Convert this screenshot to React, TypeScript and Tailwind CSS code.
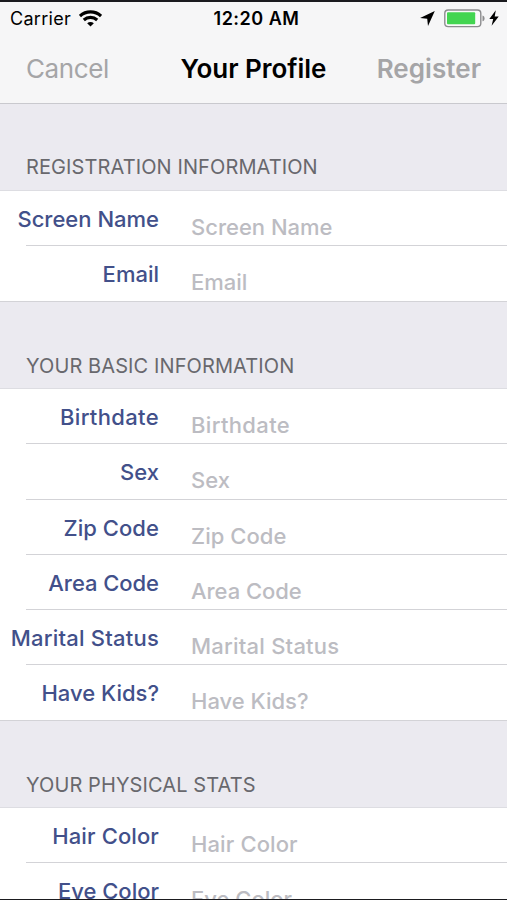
import React from 'react';

type Field = {
    name: string;
    tracking?: string;
};

type Section = {
    title: string;
    headerClass: string;
    fields: Field[];
};

const sections: Section[] = [
    {
        title: 'Registration Information',
        headerClass: 'h-[87px] pb-[9px]',
        fields: [{ name: 'Screen Name' }, { name: 'Email' }],
    },
    {
        title: 'Your Basic Information',
        headerClass: 'h-[87.5px] pb-[8px]',
        fields: [
            { name: 'Birthdate', tracking: 'tracking-[0.35px]' },
            { name: 'Sex' },
            { name: 'Zip Code', tracking: 'tracking-[0.05px]' },
            { name: 'Area Code', tracking: 'tracking-[-0.05px]' },
            { name: 'Marital Status', tracking: 'tracking-[0.22px]' },
            { name: 'Have Kids?' },
        ],
    },
    {
        title: 'Your Physical Stats',
        headerClass: 'h-[87px] pb-[8px]',
        fields: [{ name: 'Hair Color', tracking: 'tracking-[0.12px]' }, { name: 'Eye Color' }],
    },
];

const WifiIcon = () => (
    <svg className="w-[23px] h-[17px]" viewBox="0 0 22 16" fill="none" stroke="#000" strokeWidth="3">
        <path d="M0.9 5.6C6.6 0.3 15.4 0.3 21.1 5.6" />
        <path d="M4.6 9.4C8.3 6.1 13.7 6.1 17.4 9.4" />
        <path d="M7.8 12.6C9.7 10.9 12.3 10.9 14.2 12.6L11 15.6Z" fill="#000" stroke="none" />
    </svg>
);

const LocationIcon = () => (
    <svg className="w-[15px] h-[15px]" viewBox="0 0 15 15" fill="#000">
        <path d="M14.8 0.1L0.1 7.1L7.2 7.8L8 15Z" />
    </svg>
);

const BatteryIcon = () => (
    <svg className="w-[41px] h-[19px]" viewBox="0 0 41 19">
        <rect x="0.8" y="1" width="36" height="16.6" rx="3.4" fill="#fafafa" stroke="#8c8c8e" strokeWidth="1.4" />
        <rect x="3" y="3.3" width="28.2" height="12" rx="1" fill="#43d551" />
        <path d="M38.5 6.6C41.3 7.2 41.3 11.6 38.5 12.2Z" fill="#8c8c8e" />
    </svg>
);

const BoltIcon = () => (
    <svg className="w-[10px] h-[16px]" viewBox="0 0 10 16" fill="#000">
        <path d="M6.8 0.2L0.3 9H4.2L2.6 15.8L9.7 6.5H5.7Z" />
    </svg>
);

const StatusBar = () => (
    <div className="h-[33px] grid grid-cols-3 leading-[33px]">
        <div className="flex items-center gap-[8px] pl-[10px] pb-px text-[18px] tracking-[0.3px]">
            <span>Carrier</span>
            <WifiIcon />
        </div>
        <div className="text-center text-[18px] font-semibold tracking-[0.5px] pl-[6px]">12:20 AM</div>
        <div className="flex items-center justify-end pr-[8px] pb-[2px]">
            <LocationIcon />
            <span className="w-[9px]" />
            <BatteryIcon />
            <span className="w-[4px]" />
            <BoltIcon />
        </div>
    </div>
);

const NavBar = () => (
    <header className="h-[68px] grid grid-cols-[150px_1fr_150px] px-[26px] text-[26px] leading-[68px] whitespace-nowrap">
        <button className="text-left text-[#a5a5a7] tracking-[-0.4px]">Cancel</button>
        <h1 className="flex justify-center font-semibold tracking-[-0.02px]">Your Profile</h1>
        <button className="text-right font-semibold text-[#a5a5a7] tracking-[0.05px]">Register</button>
    </header>
);

const FieldRow = ({ field }: { field: Field }) => (
    <div className={`h-[55.25px] flex text-[22px] font-medium leading-[56px] whitespace-nowrap ${field.tracking ?? ''}`}>
        <label className="w-[159px] shrink-0 text-right text-[#42508a]">{field.name}</label>
        <span className="pl-[32px] pt-[8px] h-[55px] text-[#bcbcc2]">{field.name}</span>
    </div>
);

const App: React.FC = () => {
    return (
        <div className="h-[900px] w-[507px] overflow-hidden bg-[#ebeaf0] font-['Inter',sans-serif] text-black border-t-2 border-b border-[#1b1b1f]">
            <div className="bg-[#f6f6f7] h-[102px] border-b border-[#c9c9ce]">
                <StatusBar />
                <NavBar />
            </div>

            {sections.map((section) => (
                <section key={section.title}>
                    <h2 className={`flex items-end pl-[26px] text-[20px] leading-[27px] uppercase text-[#68686d] tracking-[0.1px] border-b border-[#dddde2] ${section.headerClass}`}>
                        {section.title}
                    </h2>
                    <div className="bg-white">
                        {section.fields.map((field, index) => (
                            <div key={field.name} className="relative">
                                <FieldRow field={field} />
                                {/* inset separator, full width under the last row */}
                                <i
                                    className={`absolute right-0 bottom-0 h-px bg-[#d3d3d7] ${index === section.fields.length - 1 ? 'left-0' : 'left-[26px]'}`}
                                />
                            </div>
                        ))}
                    </div>
                </section>
            ))}
        </div>
    );
};

export default App;
